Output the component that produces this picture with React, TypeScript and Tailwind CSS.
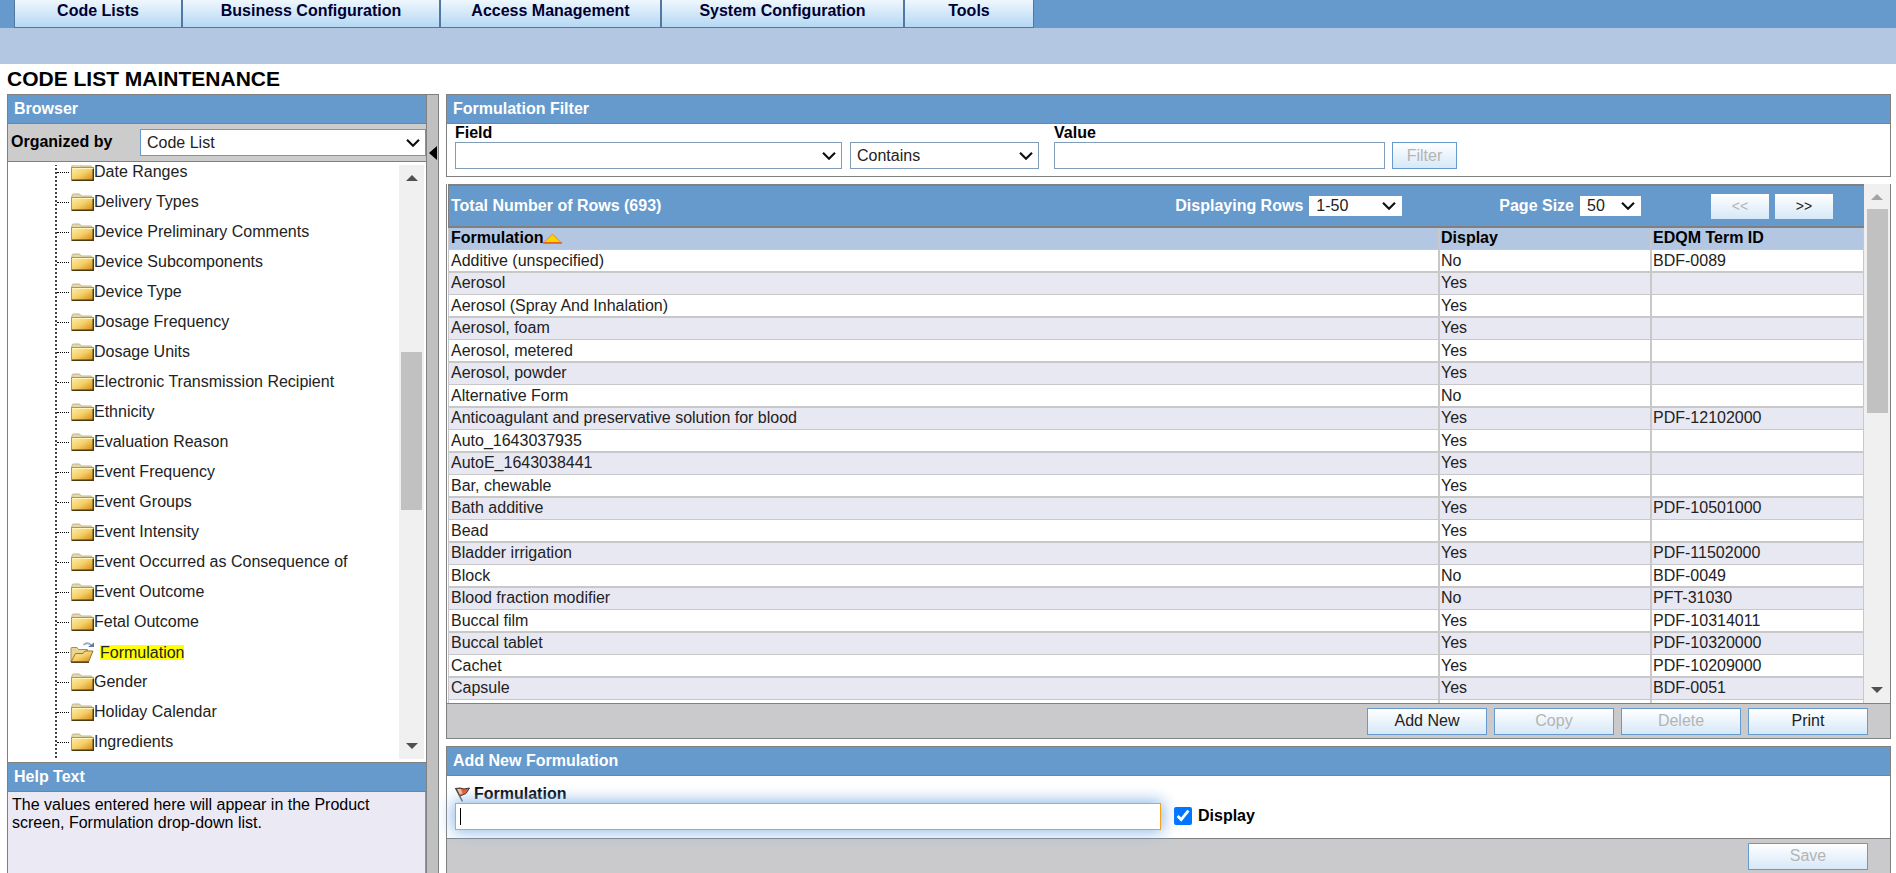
import React from "react";

const NAV = [
  { label: "Code Lists", width: "w-[168px]" },
  { label: "Business Configuration", width: "w-[258px]" },
  { label: "Access Management", width: "w-[221px]" },
  { label: "System Configuration", width: "w-[243px]" },
  { label: "Tools", width: "w-[130px]" },
];

const TREE = [
  "Date Ranges",
  "Delivery Types",
  "Device Preliminary Comments",
  "Device Subcomponents",
  "Device Type",
  "Dosage Frequency",
  "Dosage Units",
  "Electronic Transmission Recipient",
  "Ethnicity",
  "Evaluation Reason",
  "Event Frequency",
  "Event Groups",
  "Event Intensity",
  "Event Occurred as Consequence of",
  "Event Outcome",
  "Fetal Outcome",
  "Formulation",
  "Gender",
  "Holiday Calendar",
  "Ingredients",
];

const ROWS: [string, string, string][] = [
  ["Additive (unspecified)", "No", "BDF-0089"],
  ["Aerosol", "Yes", ""],
  ["Aerosol (Spray And Inhalation)", "Yes", ""],
  ["Aerosol, foam", "Yes", ""],
  ["Aerosol, metered", "Yes", ""],
  ["Aerosol, powder", "Yes", ""],
  ["Alternative Form", "No", ""],
  ["Anticoagulant and preservative solution for blood", "Yes", "PDF-12102000"],
  ["Auto_1643037935", "Yes", ""],
  ["AutoE_1643038441", "Yes", ""],
  ["Bar, chewable", "Yes", ""],
  ["Bath additive", "Yes", "PDF-10501000"],
  ["Bead", "Yes", ""],
  ["Bladder irrigation", "Yes", "PDF-11502000"],
  ["Block", "No", "BDF-0049"],
  ["Blood fraction modifier", "No", "PFT-31030"],
  ["Buccal film", "Yes", "PDF-10314011"],
  ["Buccal tablet", "Yes", "PDF-10320000"],
  ["Cachet", "Yes", "PDF-10209000"],
  ["Capsule", "Yes", "BDF-0051"],
  ["", "", ""],
];

function FolderGradient() {
  return (
    <svg width="0" height="0" className="absolute" aria-hidden="true">
      <defs>
        <linearGradient id="folder" x1="0" y1="0" x2="1" y2="1">
          <stop offset="0" stopColor="#fdf0a8" />
          <stop offset="0.5" stopColor="#f5cf68" />
          <stop offset="1" stopColor="#d0850c" />
        </linearGradient>
      </defs>
    </svg>
  );
}

function ClosedFolder() {
  return (
    <svg width="23" height="18" viewBox="0 0 23 18" aria-hidden="true" className="shrink-0">
      <path d="M1 17V2.500Q1 1 2.500 1H8q1 0 1.500 1L10 3H20q1 0 1 1v1" fill="#e6d7a6" stroke="#c0b592" />
      <rect x="0.500" y="4.500" width="22" height="13" fill="url(#folder)" stroke="#a39678" />
      <path d="M1.500 5.500H21.500" stroke="#fff6c4" />
      <path d="M1 17.300H22.300V6" fill="none" stroke="#4c3915" strokeWidth="1.500" />
    </svg>
  );
}

function OpenFolder() {
  return (
    <svg width="25" height="21" viewBox="0 0 25 21" aria-hidden="true" className="shrink-0">
      <path d="M1 20V6.500Q1 5.500 2 5.500H7l1.500 2H17.500V11" fill="#ecd591" stroke="#a08c68" />
      <path d="M1 20L5.500 11.500H13L15 9H23L18.500 20Z" fill="url(#folder)" stroke="#9c7430" />
      <path d="M1 20.200H19" stroke="#4c3b1a" strokeWidth="1.400" />
      <path d="M13.500 3Q17 -0.500 21 3" fill="none" stroke="#93a9c6" strokeWidth="1.700" />
      <path d="M18 5H24V0.500Z" fill="#5c7ba6" />
    </svg>
  );
}

function Chevron() {
  return (
    <svg
      width="14"
      height="9"
      viewBox="0 0 14 9"
      aria-hidden="true"
      className="pointer-events-none absolute top-1/2 right-[6px] -translate-y-1/2"
    >
      <path d="M1 1.300L7 7.300L13 1.300" fill="none" stroke="#111" strokeWidth="2.200" />
    </svg>
  );
}

function Select({
  id,
  value,
  box,
  field,
  label,
}: {
  id: string;
  value: string;
  box: string;
  field: string;
  label?: string;
}) {
  return (
    <div className={`relative shrink-0 ${box}`}>
      <select
        id={id}
        aria-label={label}
        defaultValue={value}
        className={`block h-full w-full appearance-none bg-white text-base leading-5 text-[#222] outline-none ${field}`}
      >
        <option value={value}>{value}</option>
      </select>
      <Chevron />
    </div>
  );
}

function PanelHeader({ children }: { children: React.ReactNode }) {
  return (
    <h2 className="flex h-[30px] shrink-0 items-center border-y border-[#808080] bg-[#6699cc] pl-[6px] text-base font-bold text-white">
      {children}
    </h2>
  );
}

function ActionButton({ children, disabled = false }: { children: React.ReactNode; disabled?: boolean }) {
  return (
    <button
      type="button"
      disabled={disabled}
      className="h-[27px] w-[120px] border border-[#6699cc] bg-linear-to-b from-white to-[#d6e8f8] text-base leading-6 text-[#222] disabled:text-[#b4b4b4]"
    >
      {children}
    </button>
  );
}

function ScrollArrow({ up = false, color }: { up?: boolean; color: string }) {
  return (
    <svg width="12" height="6" viewBox="0 0 12 6" aria-hidden="true" className={color}>
      <path d={up ? "M0 6L6 0L12 6Z" : "M0 0L6 6L12 0Z"} fill="currentColor" />
    </svg>
  );
}

export default function App() {
  return (
    <div className="flex h-screen flex-col overflow-hidden bg-white font-['Liberation_Sans',Arial,sans-serif] text-base leading-[18px] text-black">
      <FolderGradient />
      <nav className="flex h-7 shrink-0 bg-[#6699cc] pl-[14px]">
        {NAV.map((item) => (
          <a
            key={item.label}
            href="#"
            className={`h-7 border-x border-b border-[#53789f] bg-linear-to-b from-[#eff7fd] to-[#b4d8f4] pt-[2px] text-center font-bold text-[#000033] ${item.width}`}
          >
            {item.label}
          </a>
        ))}
      </nav>
      <div className="h-9 shrink-0 bg-[#b3c6e2]" />
      <h1 className="h-[30px] shrink-0 pt-[3px] pl-[7px] text-[21px] leading-6 font-bold">CODE LIST MAINTENANCE</h1>

      <div className="flex min-h-0 flex-1 pr-[5px] pl-[7px]">
        <aside className="flex w-[419px] shrink-0 flex-col border-l border-[#808080]">
          <PanelHeader>Browser</PanelHeader>
          <div className="flex h-[38px] shrink-0 items-center border-b border-[#808080] bg-[#cccccc] pl-[3px]">
            <label htmlFor="organized" className="w-[129px] pb-[2px] font-bold">
              Organized by
            </label>
            <Select id="organized" value="Code List" box="h-[27px] grow" field="border border-[#6699cc] pl-[6px]" />
          </div>
          <div className="flex min-h-0 flex-1 py-[3px] pr-[2px]">
            <div className="flex-1 overflow-hidden pl-[47px]">
              <ul className="-mt-2 border-l-2 border-dotted border-[#444]">
                {TREE.map((name) => (
                  <li key={name} className="flex h-[30px] items-center leading-[14px]">
                    <span className="w-3 shrink-0 border-t border-dotted border-black" />
                    {name === "Formulation" ? (
                      <a href="#" className="flex items-center gap-[5px] pl-px text-[#222]">
                        <OpenFolder />
                        <span className="bg-[#ffff00] leading-[15px]">{name}</span>
                      </a>
                    ) : (
                      <a href="#" className="flex items-center pl-[2px] text-[#222]">
                        <ClosedFolder />
                        {name}
                      </a>
                    )}
                  </li>
                ))}
                <li className="h-3" />
              </ul>
            </div>
            <div className="flex w-[25px] shrink-0 flex-col items-center bg-[#f0f0f0] py-[10px]">
              <ScrollArrow up color="text-[#505050]" />
              <div className="mt-[171px] h-[158px] w-[21px] bg-[#c1c1c1]" />
              <div className="mt-auto">
                <ScrollArrow color="text-[#505050]" />
              </div>
            </div>
          </div>
          <PanelHeader>Help Text</PanelHeader>
          <p className="h-[81px] shrink-0 border-r border-[#7f9db9] bg-[#ebe9f4] px-1 pt-1">
            The values entered here will appear in the Product screen, Formulation drop-down list.
          </p>
        </aside>

        <button
          type="button"
          aria-label="Collapse browser"
          className="flex w-[13px] shrink-0 items-start justify-center border-x border-t border-[#808080] bg-[#c0c0c0] pt-[51px]"
        >
          <svg width="8" height="14" viewBox="0 0 8 14" aria-hidden="true">
            <path d="M8 0V14L0 7Z" fill="#000" />
          </svg>
        </button>

        <main className="ml-[7px] flex min-w-0 flex-1 flex-col gap-[7px]">
          <section className="shrink-0 border-x border-b border-[#808080]">
            <PanelHeader>Formulation Filter</PanelHeader>
            <div className="flex items-end px-2 pb-[7px]">
              <div className="mr-2">
                <label htmlFor="field" className="block font-bold">
                  Field
                </label>
                <Select id="field" value="" box="h-[27px] w-[387px]" field="border border-[#7f9db9] pl-[6px]" />
              </div>
              <Select
                id="operator"
                value="Contains"
                label="Operator"
                box="h-[27px] w-[189px] mr-[15px]"
                field="border border-[#7f9db9] pl-[6px]"
              />
              <div className="mr-[7px]">
                <label htmlFor="value" className="block font-bold">
                  Value
                </label>
                <input id="value" type="text" className="block h-[27px] w-[331px] border border-[#7f9db9] px-1" />
              </div>
              <button
                type="button"
                disabled
                className="h-[27px] w-[65px] border border-[#6699cc] bg-linear-to-b from-white to-[#d6e8f8] disabled:text-[#b4b4b4]"
              >
                Filter
              </button>
            </div>
          </section>

          <section className="flex min-h-0 flex-1 flex-col border-x border-b border-[#808080]">
            <div className="flex min-h-0 flex-1 pl-px">
              <div className="flex min-w-0 flex-1 flex-col">
                <div className="flex h-11 shrink-0 items-center border-y-2 border-l border-[#808080] bg-[#6699cc] pr-[31px] pl-[2px] font-bold text-white">
                  <span className="mr-auto">Total Number of Rows (693)</span>
                  <label htmlFor="rows" className="mr-[6px]">
                    Displaying Rows
                  </label>
                  <Select id="rows" value="1-50" box="h-5 w-[93px] mr-[97px]" field="pl-[7px] font-normal" />
                  <label htmlFor="size" className="mr-[6px]">
                    Page Size
                  </label>
                  <Select id="size" value="50" box="h-5 w-[61px] mr-[70px]" field="pl-[7px] font-normal" />
                  <button
                    type="button"
                    disabled
                    className="mr-[6px] h-[25px] w-[58px] bg-linear-to-b from-white to-[#d6e8f8] text-sm font-normal text-[#b4b4b4]"
                  >
                    &lt;&lt;
                  </button>
                  <button
                    type="button"
                    className="h-[25px] w-[58px] bg-linear-to-b from-white to-[#d6e8f8] text-sm font-normal text-[#222]"
                  >
                    &gt;&gt;
                  </button>
                </div>
                <div className="min-h-0 flex-1 overflow-hidden">
                  <table className="w-full table-fixed border-separate border-spacing-0 border-l border-[#c8c8c8] text-left text-[#222]">
                    <thead className="bg-[#b3c6e2] text-black">
                      <tr className="h-[22px]">
                        <th className="border-b border-[#c8c8c8] p-0 pl-[2px] align-top leading-5">
                          <span className="flex items-center">
                            Formulation
                            <svg width="19" height="11" viewBox="0 0 19 11" aria-hidden="true">
                              <path d="M1 9.500L9.500 1L18 9.500Z" fill="#f2d600" stroke="#f08a1c" />
                              <path d="M0 10H19" stroke="#f0561c" strokeWidth="1.500" />
                            </svg>
                          </span>
                        </th>
                        <th className="w-[212px] border-b border-l-2 border-[#c8c8c8] p-0 pl-px align-top leading-5">
                          Display
                        </th>
                        <th className="w-[214px] border-r border-b border-l-2 border-[#c8c8c8] p-0 pl-px align-top leading-5">
                          EDQM Term ID
                        </th>
                      </tr>
                    </thead>
                    <tbody>
                      {ROWS.map(([name, display, term], i) => {
                        const line = i % 2 === 0 ? "border-b-2 h-[23px]" : "border-b h-[22px] align-top";
                        return (
                          <tr key={i} className={i % 2 === 0 ? "bg-white" : "bg-[#e8e8f3]"}>
                            <td className={`border-[#c8c8c8] p-0 pl-[2px] leading-5 ${line}`}>{name}</td>
                            <td className={`border-l-2 border-[#c8c8c8] p-0 pl-px leading-5 ${line}`}>{display}</td>
                            <td className={`border-r border-l-2 border-[#c8c8c8] p-0 pl-px leading-5 ${line}`}>{term}</td>
                          </tr>
                        );
                      })}
                    </tbody>
                  </table>
                </div>
              </div>
              <div className="flex w-[26px] shrink-0 flex-col items-center bg-[#f0f0f0] py-[10px]">
                <ScrollArrow up color="text-[#a3a3a3]" />
                <div className="mt-[9px] h-[204px] w-[21px] bg-[#c1c1c1]" />
                <div className="mt-auto">
                  <ScrollArrow color="text-[#505050]" />
                </div>
              </div>
            </div>
            <div className="flex h-[35px] shrink-0 items-center justify-end gap-[7px] border-t border-[#808080] bg-[#cacacc] pr-[22px]">
              <ActionButton>Add New</ActionButton>
              <ActionButton disabled>Copy</ActionButton>
              <ActionButton disabled>Delete</ActionButton>
              <ActionButton>Print</ActionButton>
            </div>
          </section>

          <section className="shrink-0 border-x border-[#808080]">
            <PanelHeader>Add New Formulation</PanelHeader>
            <div className="flex items-end gap-[13px] px-2 pt-[9px] pb-2">
              <div>
                <label htmlFor="name" className="flex items-center gap-1 font-bold">
                  <svg width="15" height="15" viewBox="0 0 15 15" aria-hidden="true">
                    <path d="M1 1.500L5 1L9 2L14.500 1L11 6.500L5 9Z" fill="#f0561e" stroke="#3c2a26" />
                    <path d="M2 2L6 2L7.500 6.500L4.500 7.500Z" fill="#e9c0a0" />
                    <path d="M0.500 1L7.500 14.500" stroke="#4a4040" strokeWidth="1.400" />
                  </svg>
                  Formulation
                </label>
                <div className="relative">
                  <input
                    id="name"
                    type="text"
                    autoFocus
                    className="block h-[27px] w-[706px] border border-[#f5a01c] bg-white px-1 caret-transparent shadow-[0_0_16px_2px_#8db8e6] outline-none"
                  />
                  <span className="absolute top-[5px] left-[5px] h-[17px] w-px bg-black" />
                </div>
              </div>
              <label className="flex h-[29px] items-center gap-[6px] font-bold">
                <input type="checkbox" defaultChecked className="size-[18px] accent-[#0075ff]" />
                Display
              </label>
            </div>
            <div className="flex h-[35px] items-center justify-end border-t border-[#808080] bg-[#cacacc] pr-[22px]">
              <ActionButton disabled>Save</ActionButton>
            </div>
          </section>
        </main>
      </div>
    </div>
  );
}
